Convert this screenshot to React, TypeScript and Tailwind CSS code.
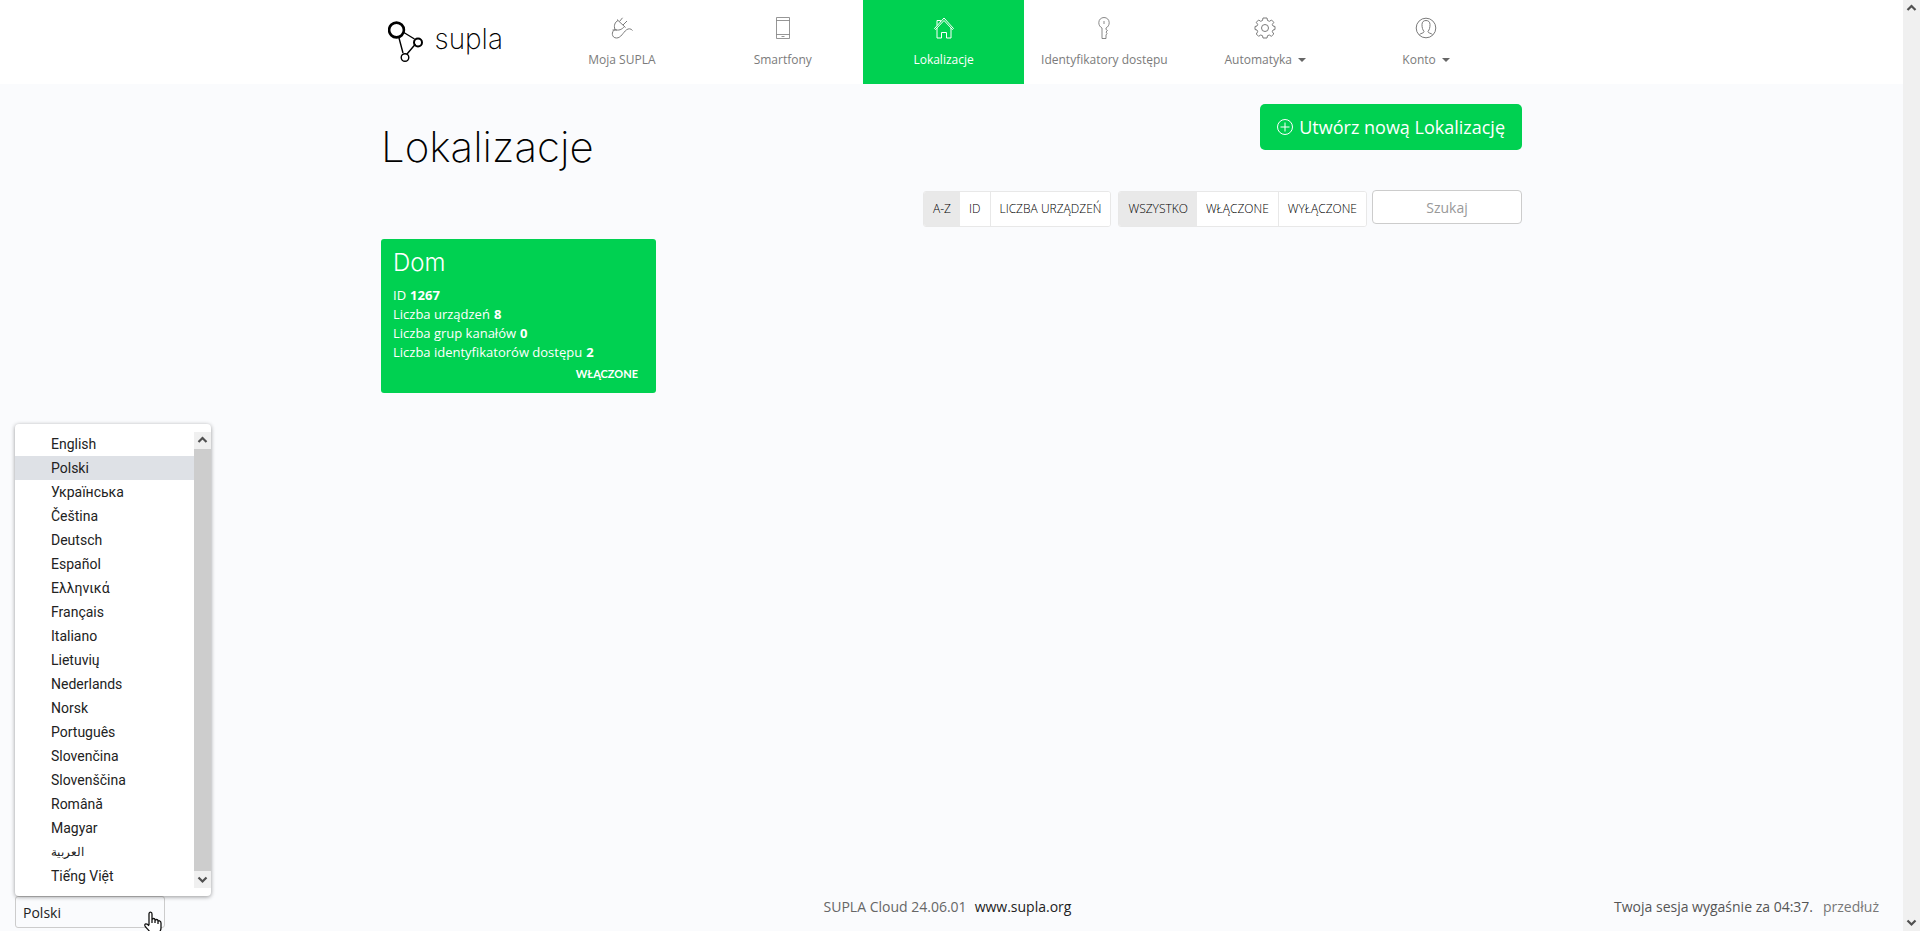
import type { ReactNode } from 'react';

const languages = [
  'English', 'Polski', 'Українська', 'Čeština', 'Deutsch', 'Español', 'Ελληνικά', 'Français',
  'Italiano', 'Lietuvių', 'Nederlands', 'Norsk', 'Português', 'Slovenčina', 'Slovenščina',
  'Română', 'Magyar', 'العربية', 'Tiếng Việt',
];

function Icon({ children }: { children: ReactNode }) {
  return (
    <svg viewBox="0 0 24 24" className="size-6" fill="none" stroke="currentColor" strokeWidth="1" strokeLinejoin="round" aria-hidden="true">
      {children}
    </svg>
  );
}

function PlugIcon() {
  return (
    <Icon>
      <path d="M7 3.500 L15.500 11.500 M8 4.500 C5 6 3.500 9.500 5 13.500 C8.500 15 12 13.500 14.500 10.500 M9.500 5.500 L12.500 1.800 M13 9 L17 5 M2.500 14 H7" />
      <path d="M5 13.500 C1 15.500 1.500 22 6.500 22 C11 22 13 16.500 16.500 13.800 C18.500 12.300 21 12.500 22.500 14.500" />
    </Icon>
  );
}

function PhoneIcon() {
  return (
    <Icon>
      <path d="M5.500 1.500 H18.500 V22.500 H5.500 Z M5.500 4.500 H18.500 M5.500 18.500 H18.500 M10.500 20.500 H13.500" strokeWidth="0.800" />
    </Icon>
  );
}

function HouseIcon() {
  return (
    <Icon>
      <path d="M2.500 12.500 L12 2 L21.500 12.500 L20.500 13.500 L12 4.500 L3.500 13.500 Z M5 12 V22 H9.500 V16.500 H14.500 V22 H19 V12 M5 9.500 V4.500 H8.500 V6" />
    </Icon>
  );
}

function KeyIcon() {
  return (
    <Icon>
      <path d="M10 12 C8 11 6.800 9 6.800 6.700 C6.800 3.700 9 1.500 12 1.500 C15 1.500 17.200 3.700 17.200 6.700 C17.200 9 16 11 14 12 V13.500 L15.500 14.500 L14 16 L15 17.500 L14 19 V22.500 H10 Z M12 5 V8" strokeWidth="0.900" />
    </Icon>
  );
}

function GearIcon() {
  return (
    <Icon>
      <circle cx="12" cy="12" r="3.500" />
      <path d="M10 2 H14 L14.500 4.500 L16.500 5.300 L18.500 4 L20.800 6.300 L19.300 8.500 L20 10 L22 10.500 V13.500 L20 14 L19.300 15.700 L20.800 18 L18.300 20.300 L16.300 19 L14.500 19.700 L14 22 H10 L9.500 19.700 L7.700 19 L5.600 20.300 L3.300 18 L4.700 15.700 L4 14 L2 13.500 V10.500 L4 10 L4.700 8.500 L3.300 6.300 L5.600 4 L7.700 5.300 L9.500 4.500 Z" />
    </Icon>
  );
}

function UserIcon() {
  return (
    <Icon>
      <circle cx="12" cy="12" r="9.800" />
      <path d="M5.500 18.700 C6.500 17 10 17.500 10 15.500 C8.500 13.500 8 11.500 8 8.500 C8 6 9.500 4.500 12 4.500 C14.500 4.500 16 6 16 8.500 C16 11.500 15.500 13.500 14 15.500 C14 17.500 17.500 17 18.500 18.700" />
    </Icon>
  );
}

function Logo() {
  return (
    <svg viewBox="0 0 36 42" className="h-[42px] w-9 shrink-0" fill="none" stroke="#000" aria-hidden="true">
      <path d="M15 11 L26.500 18 M11 17 L15 32 M27.500 23 L19 33" strokeWidth="1.400" />
      <circle cx="8.500" cy="9" r="7.400" strokeWidth="2.600" />
      <circle cx="30" cy="21.500" r="4" strokeWidth="2" />
      <circle cx="17" cy="36.500" r="3.800" strokeWidth="1.400" />
    </svg>
  );
}

const navItems = [
  { label: 'Moja SUPLA', icon: <PlugIcon /> },
  { label: 'Smartfony', icon: <PhoneIcon /> },
  { label: 'Lokalizacje', icon: <HouseIcon />, active: true },
  { label: 'Identyfikatory dostępu', icon: <KeyIcon /> },
  { label: 'Automatyka', icon: <GearIcon />, menu: true },
  { label: 'Konto', icon: <UserIcon />, menu: true },
];

function Chevron({ down = false }: { down?: boolean }) {
  return (
    <svg viewBox="0 0 17 17" className="size-[17px] shrink-0" fill="none" stroke="#505050" strokeWidth="2.200" aria-hidden="true">
      {down ? <path d="M4.500 6.500 L8.500 10.500 L12.500 6.500" /> : <path d="M4.500 10 L8.500 6 L12.500 10" />}
    </svg>
  );
}

function FilterGroup({ label, options }: { label: string; options: string[] }) {
  return (
    <div role="group" aria-label={label} className="flex h-9 overflow-hidden rounded-[3px] border border-[#e8e8e8] bg-white">
      {options.map((option, i) => (
        <button
          key={option}
          type="button"
          aria-pressed={i === 0}
          className={`px-[9px] text-[12px] font-light text-black ${i === 0 ? 'bg-[#e9e9e9]' : 'bg-white'} ${i > 1 ? 'border-l border-[#e8e8e8]' : ''}`}
        >
          {option}
        </button>
      ))}
    </div>
  );
}

function Stat({ label, value }: { label: string; value: number }) {
  return (
    <div className="flex gap-1">
      <dt className="font-medium">{label}</dt>
      <dd className="font-bold">{value}</dd>
    </div>
  );
}

function LanguagePicker() {
  return (
    <div className="relative w-[150px]">
      <select id="language" aria-label="Język" defaultValue="Polski" className="block h-8 w-full appearance-none rounded-[3px] border border-[#ccc] bg-transparent px-[7px] pt-0.5 text-[14px] font-normal text-[#222]">
        {languages.map((language) => <option key={language}>{language}</option>)}
      </select>
      <div className="absolute bottom-full left-0 flex w-[196px] rounded-[4px] bg-white py-2 font-['Roboto','Noto_Sans',sans-serif] text-[14px] leading-6 font-normal text-[#222] shadow-[0_1px_4px_rgba(0,0,0,0.4)]">
        <ul role="listbox" aria-label="Język" className="grow">
          {languages.map((language) => (
            <li key={language} role="option" aria-selected={language === 'Polski'} className={`h-6 pl-9 ${language === 'Polski' ? 'bg-[#dee1e6]' : ''} ${language === 'العربية' ? 'text-[12px]' : ''}`}>
              {language}
            </li>
          ))}
        </ul>
        <div className="flex w-[17px] flex-col justify-between bg-[#f0f0f0]">
          <Chevron />
          <div className="w-full grow bg-[#cdcdcd]" />
          <Chevron down />
        </div>
      </div>
      <svg viewBox="0 0 20 24" className="absolute top-[15px] left-[128px] h-6 w-5" fill="#fff" stroke="#111" strokeWidth="1.300" strokeLinejoin="round" aria-hidden="true">
        <path d="M6 14 V3 C6 .5 9 .5 9 3 V9 C9 7 12 7 12 9 V10 C12 8 15 8 15 10 V11 C15 9 18 9.500 18 12 V17 C18 20 16 21 16 23 H8 C7 20 3 17 2 15 C1 12.500 4 12 6 15 M9 9 V12 M12 10 V12 M15 11 V13" />
      </svg>
    </div>
  );
}

export default function App() {
  return (
    <div className="flex h-screen overflow-hidden bg-[#fafbfd] font-['Open_Sans','Noto_Sans',sans-serif] text-black">
      <div className="flex min-w-0 grow flex-col">
        <header className="bg-white">
          <div className="mx-auto flex h-[84px] max-w-[1140px] px-1.5">
            <a href="#" className="flex w-[154px] items-center gap-[11px]">
              <Logo />
              <span className="pb-1.5 font-['Inter',sans-serif] text-[28px] font-extralight">supla</span>
            </a>
            <nav className="grid grow grid-cols-6 pr-[9px]">
              {navItems.map((item) => (
                <a
                  key={item.label}
                  href="#"
                  aria-current={item.active ? 'page' : undefined}
                  className={`flex flex-col items-center gap-[11px] pt-4 text-[12px] whitespace-nowrap ${item.active ? 'bg-[#00d151] text-white' : 'text-[#7b7b7b]'}`}
                >
                  {item.icon}
                  <span className="flex items-center gap-1.5">
                    {item.label}
                    {item.menu && <span className="border-x-4 border-t-4 border-x-transparent border-t-[#666]" />}
                  </span>
                </a>
              ))}
            </nav>
          </div>
        </header>

        <main className="mx-auto w-full max-w-[1141px] grow pt-5">
          <div className="flex items-start justify-between">
            <h1 className="pt-4 font-['Inter',sans-serif] text-[42px] leading-[54px] font-extralight">Lokalizacje</h1>
            <button type="button" className="flex h-[46px] items-center gap-1.5 rounded-[5px] bg-[#00d151] px-[17px] text-[18px] text-white">
              <svg viewBox="0 0 16 16" className="size-4" fill="none" stroke="currentColor" aria-hidden="true">
                <circle cx="8" cy="8" r="7.500" />
                <path d="M8 3.500 V12.500 M3.500 8 H12.500" />
              </svg>
              Utwórz nową Lokalizację
            </button>
          </div>
          <div className="mt-4 flex items-end justify-end">
            <FilterGroup label="Sortowanie" options={['A-Z', 'ID', 'LICZBA URZĄDZEŃ']} />
            <div className="w-[7px]" />
            <FilterGroup label="Stan" options={['WSZYSTKO', 'WŁĄCZONE', 'WYŁĄCZONE']} />
            <input type="text" aria-label="Szukaj" placeholder="Szukaj" className="mb-[3px] ml-[5px] h-[34px] w-[150px] rounded-[4px] border border-[#ccc] bg-white text-center text-[14px] placeholder:text-[#999]" />
          </div>
          <a href="#" className="mt-3 block w-[275px] rounded-[3px] bg-[#00d151] px-3 pt-2 pb-[11px] text-white">
            <h2 className="font-['Inter',sans-serif] text-[24px] leading-8 font-light">Dom</h2>
            <dl className="mt-[7px] text-[13px] leading-[19px]">
              <Stat label="ID" value={1267} />
              <Stat label="Liczba urządzeń" value={8} />
              <Stat label="Liczba grup kanałów" value={0} />
              <Stat label="Liczba identyfikatorów dostępu" value={2} />
            </dl>
            <p className="mt-1 pr-1.5 text-right font-['Lato',sans-serif] text-[11px] leading-4 font-bold">WŁĄCZONE</p>
          </a>
        </main>

        <footer className="grid grid-cols-3 items-start px-[15px] pb-[3px] text-[14px] leading-[22px]">
          <LanguagePicker />
          <p className="flex justify-center gap-2 pr-2">
            <span className="text-[#666]">SUPLA Cloud 24.06.01</span>
            <a href="#" className="text-[#222]">www.supla.org</a>
          </p>
          <p className="flex justify-end gap-2.5 pr-[9px] text-[#555]">
            <span>Twoja sesja wygaśnie za 04:37.</span>
            <a href="#" className="text-[#777]">przedłuż</a>
          </p>
        </footer>
      </div>
      <div className="flex w-[17px] shrink-0 flex-col justify-between bg-[#f0f0f0]">
        <Chevron />
        <Chevron down />
      </div>
    </div>
  );
}
